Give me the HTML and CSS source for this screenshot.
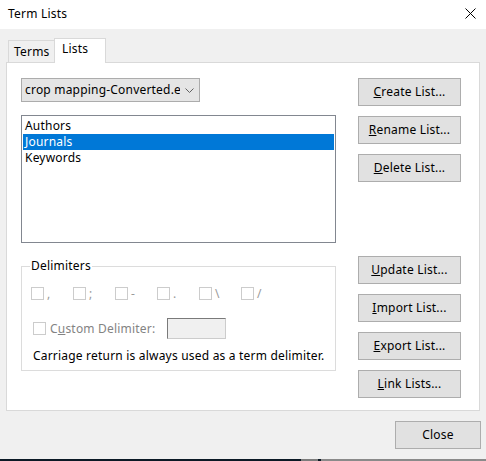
FILE: index.html
```html
<!DOCTYPE html>
<html>
<head>
<meta charset="utf-8">
<link rel="stylesheet" href="styles.css">
</head>
<body>
<div class="window">
  <div class="titlebar">
    <span class="title">Term Lists</span>
    <svg class="close-x" width="11" height="11" viewBox="0 0 11 11"><path d="M0.5 0.5 L10.5 10.5 M10.5 0.5 L0.5 10.5" stroke="#000" stroke-width="1" fill="none"/></svg>
  </div>
  <div class="client">
    <div class="tabs">
      <div class="tab">Terms</div>
      <div class="tab active">Lists</div>
    </div>
    <div class="panel">
      <div class="left">
        <div class="dropdown">
          <span class="dd-text">crop mapping-Converted.enl</span>
          <svg class="chev" width="9" height="5" viewBox="0 0 9 5"><path d="M0.5 0.5 L4.5 4.5 L8.5 0.5" stroke="#606060" stroke-width="1" fill="none"/></svg>
        </div>
        <div class="listbox">
          <div class="item">Authors</div>
          <div class="item selected">Journals</div>
          <div class="item">Keywords</div>
        </div>
        <div class="group">
          <div class="group-title">Delimiters</div>
          <div class="delims">
            <span class="chk"><span class="box"></span>,</span>
            <span class="chk"><span class="box"></span>;</span>
            <span class="chk"><span class="box"></span>-</span>
            <span class="chk"><span class="box"></span>.</span>
            <span class="chk"><span class="box"></span>\</span>
            <span class="chk"><span class="box"></span>/</span>
          </div>
          <div class="custom">
            <span class="box"></span>
            <span class="custom-label">C<u>u</u>stom Delimiter:</span>
            <span class="custom-input"></span>
          </div>
          <div class="note">Carriage return is always used as a term delimiter.</div>
        </div>
      </div>
      <div class="right">
        <div class="btn"><u>C</u>reate List...</div>
        <div class="btn"><u>R</u>ename List...</div>
        <div class="btn"><u>D</u>elete List...</div>
        <div class="btn update"><u>U</u>pdate List...</div>
        <div class="btn"><u>I</u>mport List...</div>
        <div class="btn"><u>E</u>xport List...</div>
        <div class="btn"><u>L</u>ink Lists...</div>
      </div>
    </div>
    <div class="footer">
      <div class="btn close">Close</div>
    </div>
  </div>
  <div class="taskbar">
    <span class="tb-dark"></span><span class="tb-gray1"></span><span class="tb-dark2"></span><span class="tb-gray2"></span>
  </div>
</div>
</body>
</html>
```

FILE: styles.css
```css
* { box-sizing: border-box; }
html, body { margin: 0; padding: 0; }
body {
  width: 486px;
  height: 461px;
  overflow: hidden;
  font-family: "Noto Sans", "Noto Sans CJK SC", sans-serif;
  font-size: 12px;
  letter-spacing: 0.2px;
  color: #000;
  background: #f0f0f0;
}
.window {
  display: flex;
  flex-direction: column;
  height: 461px;
}
.titlebar {
  height: 29px;
  background: #fff;
  display: flex;
  align-items: center;
  justify-content: space-between;
  padding: 0 10px 0 8px;
  flex: none;
}
.title { font-size: 12px; line-height: 16px; margin-top: -2px; }
.close-x { margin-top: -2px; }
.client {
  flex: 1;
  background: #f0f0f0;
  padding: 9px 6px 0 6px;
  display: flex;
  flex-direction: column;
}
.tabs {
  display: flex;
  align-items: flex-end;
  height: 24px;
  padding-left: 2px;
  position: relative;
  z-index: 1;
}
.tab {
  height: 22px;
  width: 47px;
  border: 1px solid #d9d9d9;
  border-bottom: none;
  background: #f0f0f0;
  line-height: 22px;
  padding-left: 5px;
}
.tab.active {
  height: 25px;
  margin-bottom: -1px;
  width: 52px;
  margin-left: -1px;
  background: #fff;
  line-height: 20px;
  padding-left: 7px;
}
.panel {
  height: 349px;
  border: 1px solid #d9d9d9;
  background: #fff;
  display: flex;
  gap: 22px;
  padding: 15px 18px 0 14px;
}
.left { width: 315px; display: flex; flex-direction: column; }
.right { width: 103px; display: flex; flex-direction: column; }
.dropdown {
  width: 179px;
  height: 24px;
  background: #e5e5e5;
  border: 1px solid #acacac;
  display: flex;
  align-items: center;
  padding: 0 5px 0 3px;
  gap: 5px;
}
.dd-text {
  flex: 1;
  white-space: nowrap;
  overflow: hidden;
  text-overflow: clip;
  line-height: 16px;
}
.chev { flex: none; }
.listbox {
  margin-top: 13px;
  height: 128px;
  border: 1px solid #828790;
  padding: 2px 1px 0 1px;
}
.item {
  height: 16px;
  line-height: 16px;
  padding-left: 2px;
}
.item.selected { background: #0078d7; color: #fff; }
.group {
  margin-top: 23px;
  height: 105px;
  border: 1px solid #dcdcdc;
  padding: 0 9px;
}
.group-title {
  margin-top: -9px;
  margin-left: -1px;
  width: fit-content;
  background: #fff;
  padding: 0 1px;
  line-height: 16px;
}
.delims {
  display: flex;
  margin-top: 13px;
  height: 13px;
}
.chk {
  width: 42px;
  display: flex;
  align-items: center;
  gap: 3px;
  color: #9a9a9a;
  line-height: 13px;
}
.box {
  width: 13px;
  height: 13px;
  border: 1px solid #cccccc;
  background: #fff;
  flex: none;
}
.custom {
  display: flex;
  align-items: center;
  margin-top: 18px;
  height: 21px;
  padding-left: 2px;
}
.custom-label {
  color: #838383;
  margin-left: 4px;
  width: 117px;
  line-height: 16px;
}
.custom-input {
  width: 59px;
  height: 21px;
  background: #f0f0f0;
  border: 1px solid #cccccc;
  border-top-color: #7a7a7a;
  border-left-color: #7a7a7a;
}
.note {
  margin-top: 9px;
  padding-left: 2px;
  line-height: 16px;
}
.btn {
  height: 28px;
  background: #e1e1e1;
  border: 1px solid #adadad;
  display: flex;
  align-items: center;
  justify-content: center;
  line-height: 16px;
}
.right .btn + .btn { margin-top: 10px; }
.right .btn.update { margin-top: 74px; }
.footer {
  display: flex;
  justify-content: flex-end;
  padding-top: 10px;
  margin-right: -1px;
  height: 48px;
}
.btn.close { width: 86px; }
.taskbar {
  height: 2px;
  display: flex;
  flex: none;
}
.tb-dark { width: 301px; background: #0c1a26; }
.tb-gray1 { width: 17px; background: #7c7c7c; }
.tb-dark2 { width: 3px; background: #0c1a26; }
.tb-gray2 { flex: 1; background: #8a8a8a; }
```
